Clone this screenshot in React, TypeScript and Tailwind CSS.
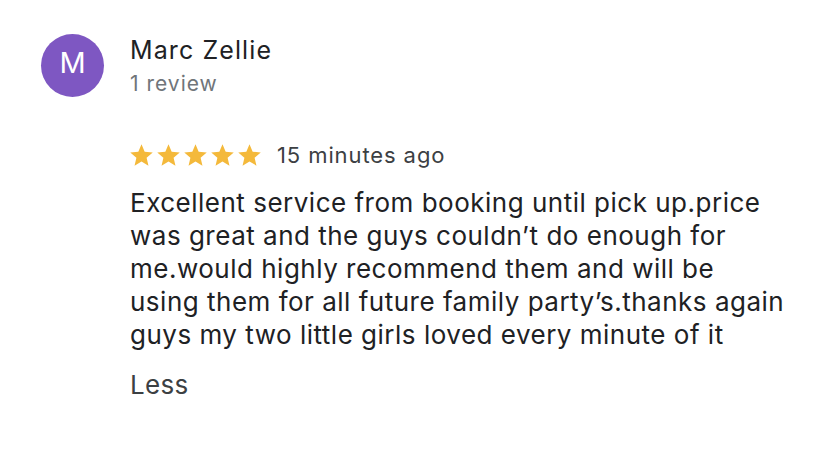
import React from "react";

const Star = () => (
  <svg width="27" height="27" viewBox="0 0 24 24" className="block shrink-0">
    <path
      fill="#f4b93b"
      d="M12 17.27L18.18 21l-1.64-7.03L22 9.24l-7.19-.61L12 2 9.19 8.63 2 9.24l5.46 4.73L5.82 21z"
    />
  </svg>
);

const lines = [
  "Excellent service from booking until pick up.price",
  "was great and the guys couldn\u2019t do enough for",
  "me.would highly recommend them and will be",
  "using them for all future family party\u2019s.thanks again",
  "guys my two little girls loved every minute of it",
];

export default function App() {
  return (
    <div
      className="w-[828px] h-[451px] bg-white overflow-hidden"
      style={{ fontFamily: "Inter, 'Noto Sans', sans-serif" }}
    >
      <div className="flex pt-[34px] pl-[41px]">
        <div className="w-[63px] h-[63px] rounded-full bg-[#7e57c2] flex items-center justify-center shrink-0">
          <span className="text-white text-[29px] leading-none -mt-[7px]">M</span>
        </div>
        <div className="ml-[26px] flex flex-col">
          <div className="mt-[1px] text-[25px] leading-[30px] tracking-[1.1px] text-[#202124]">
            Marc Zellie
          </div>
          <div className="mt-[6px] text-[21px] leading-[26px] tracking-[1px] text-[#70757a]">
            1 review
          </div>
          <div className="mt-[44px] flex items-center h-[28px]">
            <div className="flex -ml-[2px]">
              <Star />
              <Star />
              <Star />
              <Star />
              <Star />
            </div>
            <span className="ml-[14px] text-[22px] leading-[28px] tracking-[0.9px] text-[#3c4043]">
              15 minutes ago
            </span>
          </div>
          <div className="mt-[17px] text-[26px] leading-[33px] tracking-[0.5px] text-[#202124]">
            {lines.map((l) => (
              <div key={l} className="whitespace-nowrap">
                {l}
              </div>
            ))}
          </div>
          <div className="mt-[17px] text-[26px] leading-[33px] tracking-[0.3px] text-[#3c4043]">
            Less
          </div>
        </div>
      </div>
    </div>
  );
}
